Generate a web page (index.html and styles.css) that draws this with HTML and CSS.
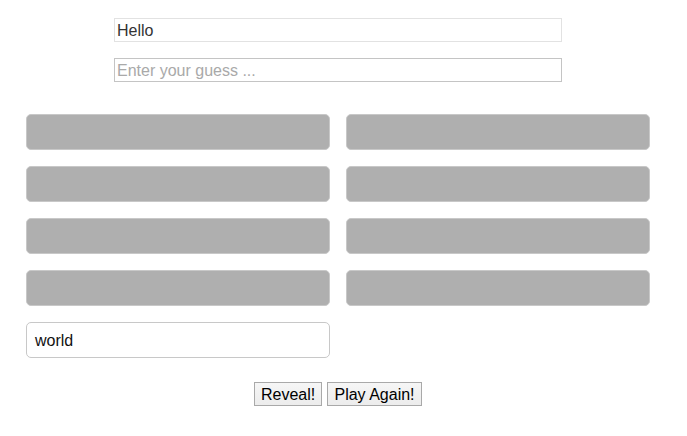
FILE: index.html
```html
<!DOCTYPE html>
<html>
<head>
<meta charset="utf-8">
<link rel="stylesheet" href="styles.css">
</head>
<body>
<div class="page">
  <div class="top">
    <input class="field field-clue" type="text" value="Hello">
    <input class="field field-guess" type="text" placeholder="Enter your guess ...">
  </div>
  <div class="tiles">
    <div class="tile"></div>
    <div class="tile"></div>
    <div class="tile"></div>
    <div class="tile"></div>
    <div class="tile"></div>
    <div class="tile"></div>
    <div class="tile"></div>
    <div class="tile"></div>
    <div class="tile tile-open">world</div>
  </div>
  <div class="actions">
    <button class="btn btn-reveal">Reveal!</button>
    <button class="btn btn-again">Play Again!</button>
  </div>
</div>
</body>
</html>
```
FILE: styles.css
```css
html, body {
  margin: 0;
  padding: 0;
  background: #fff;
}
body {
  font-family: "Liberation Sans", Arial, Helvetica, sans-serif;
}
.page {
  width: 624px;
  margin-left: 26px;
  padding-top: 18px;
}
.top {
  display: flex;
  flex-direction: column;
  align-items: center;
  gap: 16px;
}
.field {
  box-sizing: border-box;
  width: 448px;
  height: 24px;
  margin: 0;
  padding: 2px 2px 0;
  font-family: "Liberation Sans", Arial, sans-serif;
  font-size: 16px;
  color: #333;
  background: #fff;
  outline: none;
}
.field-clue {
  border: 1px solid #e2e2e2;
}
.field-guess {
  border: 1px solid #c4c4c4;
}
.field-guess::placeholder {
  color: #a9a9a9;
}
.tiles {
  margin-top: 32px;
  display: grid;
  grid-template-columns: 304px 304px;
  column-gap: 16px;
  row-gap: 16px;
}
.tile {
  box-sizing: border-box;
  height: 36px;
  border: 1px solid #c8c8c8;
  border-radius: 5px;
  background: #afafaf;
}
.tile-open {
  background: #fff;
  color: #111;
  font-size: 16px;
  line-height: 34px;
  padding: 1px 0 0 8px;
}
.actions {
  margin-top: 24px;
  display: flex;
  justify-content: center;
  gap: 5px;
}
.btn {
  box-sizing: border-box;
  height: 24px;
  margin: 0;
  padding: 1px 6px 0;
  font-family: "Liberation Sans", Arial, sans-serif;
  font-size: 16px;
  color: #000;
  background: linear-gradient(#f6f6f6, #ececec);
  border: 1px solid #a9a9a9;
  border-radius: 0;
}
.btn-reveal {
  width: 68px;
}
.btn-again {
  width: 95px;
}
```
